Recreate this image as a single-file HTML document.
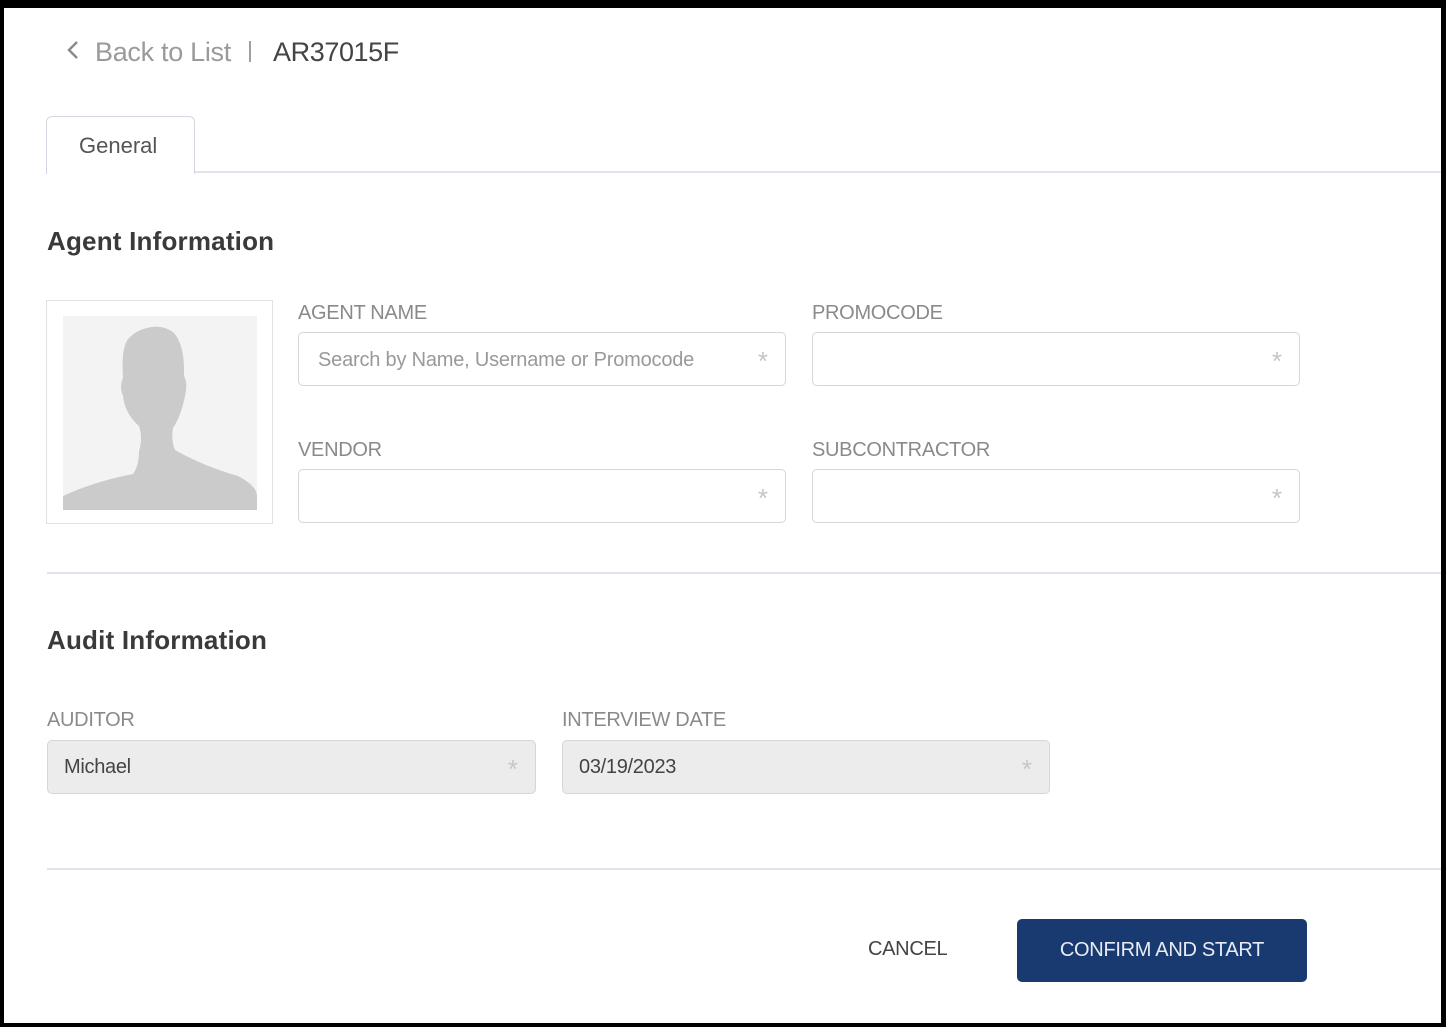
<!DOCTYPE html>
<html><head><style>
body{margin:0;width:1446px;height:1027px;background:#000;position:relative;overflow:hidden;font-family:"Liberation Sans",Arial,sans-serif}
.in{position:absolute;left:4px;top:8px;width:1437px;height:1015px;background:#fff}
.a{position:absolute}
.lbl{position:absolute;font-size:20px;color:#8a8a8a;letter-spacing:-0.3px}
.inp{position:absolute;height:54px;border:1.5px solid #d6d6d6;border-radius:5px;box-sizing:border-box;background:#fff}
.inp .st{position:absolute;right:17px;top:13px;color:#c6c6c6;font-size:26px}
.inp.g{background:#ececec}
.h{position:absolute;font-size:26px;font-weight:bold;color:#3a3a3a;letter-spacing:0.2px}
.hr{position:absolute;height:2px;background:#e2e2ec}
</style></head><body>
<div class="in"></div>
<svg class="a" style="left:66px;top:40px" width="14" height="20"><path d="M11 2 L3 10 L11 18" stroke="#8a8a8a" stroke-width="2.4" fill="none"/></svg>
<div class="a" style="left:95px;top:37px;font-size:27px;color:#9a9a9a;letter-spacing:-0.3px">Back to List</div>
<div class="a" style="left:249px;top:41px;width:2px;height:21px;background:#a0a0a0"></div>
<div class="a" style="left:273px;top:37px;font-size:27px;color:#444;letter-spacing:-0.4px">AR37015F</div>
<div class="a" style="left:46px;top:116px;width:149px;height:58px;border:1.5px solid #d4d6e2;border-bottom:none;border-radius:6px 6px 0 0;background:#fff;box-sizing:border-box"></div>
<div class="a" style="left:79px;top:133px;font-size:22px;color:#555">General</div>
<div class="hr" style="left:195px;top:171px;width:1246px;height:2px"></div>
<div class="h" style="left:47px;top:226px">Agent Information</div>
<div class="a" style="left:46px;top:300px;width:227px;height:224px;border:1.5px solid #e2e2e2;box-sizing:border-box"></div>
<div class="a" style="left:63px;top:316px;width:194px;height:194px;background:#f3f3f3;overflow:hidden">
<svg width="194" height="194"><path d="M84 12 Q98 8 110 16 Q122 28 121 60 Q125 66 122 80 Q118 100 110 112 Q108 125 112 134 Q140 150 175 160 Q194 170 194 180 L194 194 L0 194 L0 180 Q30 166 70 158 Q76 150 76 135 Q80 122 76 110 Q62 98 60 80 Q56 70 60 62 Q58 30 66 22 Q74 14 84 12 Z" fill="#cbcbcb"/></svg></div>
<div class="lbl" style="left:298px;top:302px">AGENT NAME</div>
<div class="inp" style="left:298px;top:332px;width:488px"><span class="a" style="left:19px;top:16px;font-size:20px;color:#999;letter-spacing:-0.2px">Search by Name, Username or Promocode</span><span class="st">*</span></div>
<div class="lbl" style="left:812px;top:302px">PROMOCODE</div>
<div class="inp" style="left:812px;top:332px;width:488px"><span class="st">*</span></div>
<div class="lbl" style="left:298px;top:439px">VENDOR</div>
<div class="inp" style="left:298px;top:469px;width:488px"><span class="st">*</span></div>
<div class="lbl" style="left:812px;top:439px">SUBCONTRACTOR</div>
<div class="inp" style="left:812px;top:469px;width:488px"><span class="st">*</span></div>
<div class="hr" style="left:47px;top:572px;width:1394px"></div>
<div class="h" style="left:47px;top:625px">Audit Information</div>
<div class="lbl" style="left:47px;top:709px">AUDITOR</div>
<div class="inp g" style="left:47px;top:740px;width:489px"><span class="a" style="left:16px;top:15px;font-size:20px;color:#444;letter-spacing:-0.3px">Michael</span><span class="st">*</span></div>
<div class="lbl" style="left:562px;top:709px">INTERVIEW DATE</div>
<div class="inp g" style="left:562px;top:740px;width:488px"><span class="a" style="left:16px;top:15px;font-size:20px;color:#444;letter-spacing:-0.3px">03/19/2023</span><span class="st">*</span></div>
<div class="hr" style="left:47px;top:868px;width:1394px"></div>
<div class="a" style="left:868px;top:938px;font-size:20px;color:#444;letter-spacing:-0.3px">CANCEL</div>
<div class="a" style="left:1017px;top:919px;width:290px;height:63px;background:#183a70;border-radius:5px;color:#e8ecf4;font-size:20px;text-align:center;line-height:62px;letter-spacing:-0.3px">CONFIRM AND START</div>
</body></html>
